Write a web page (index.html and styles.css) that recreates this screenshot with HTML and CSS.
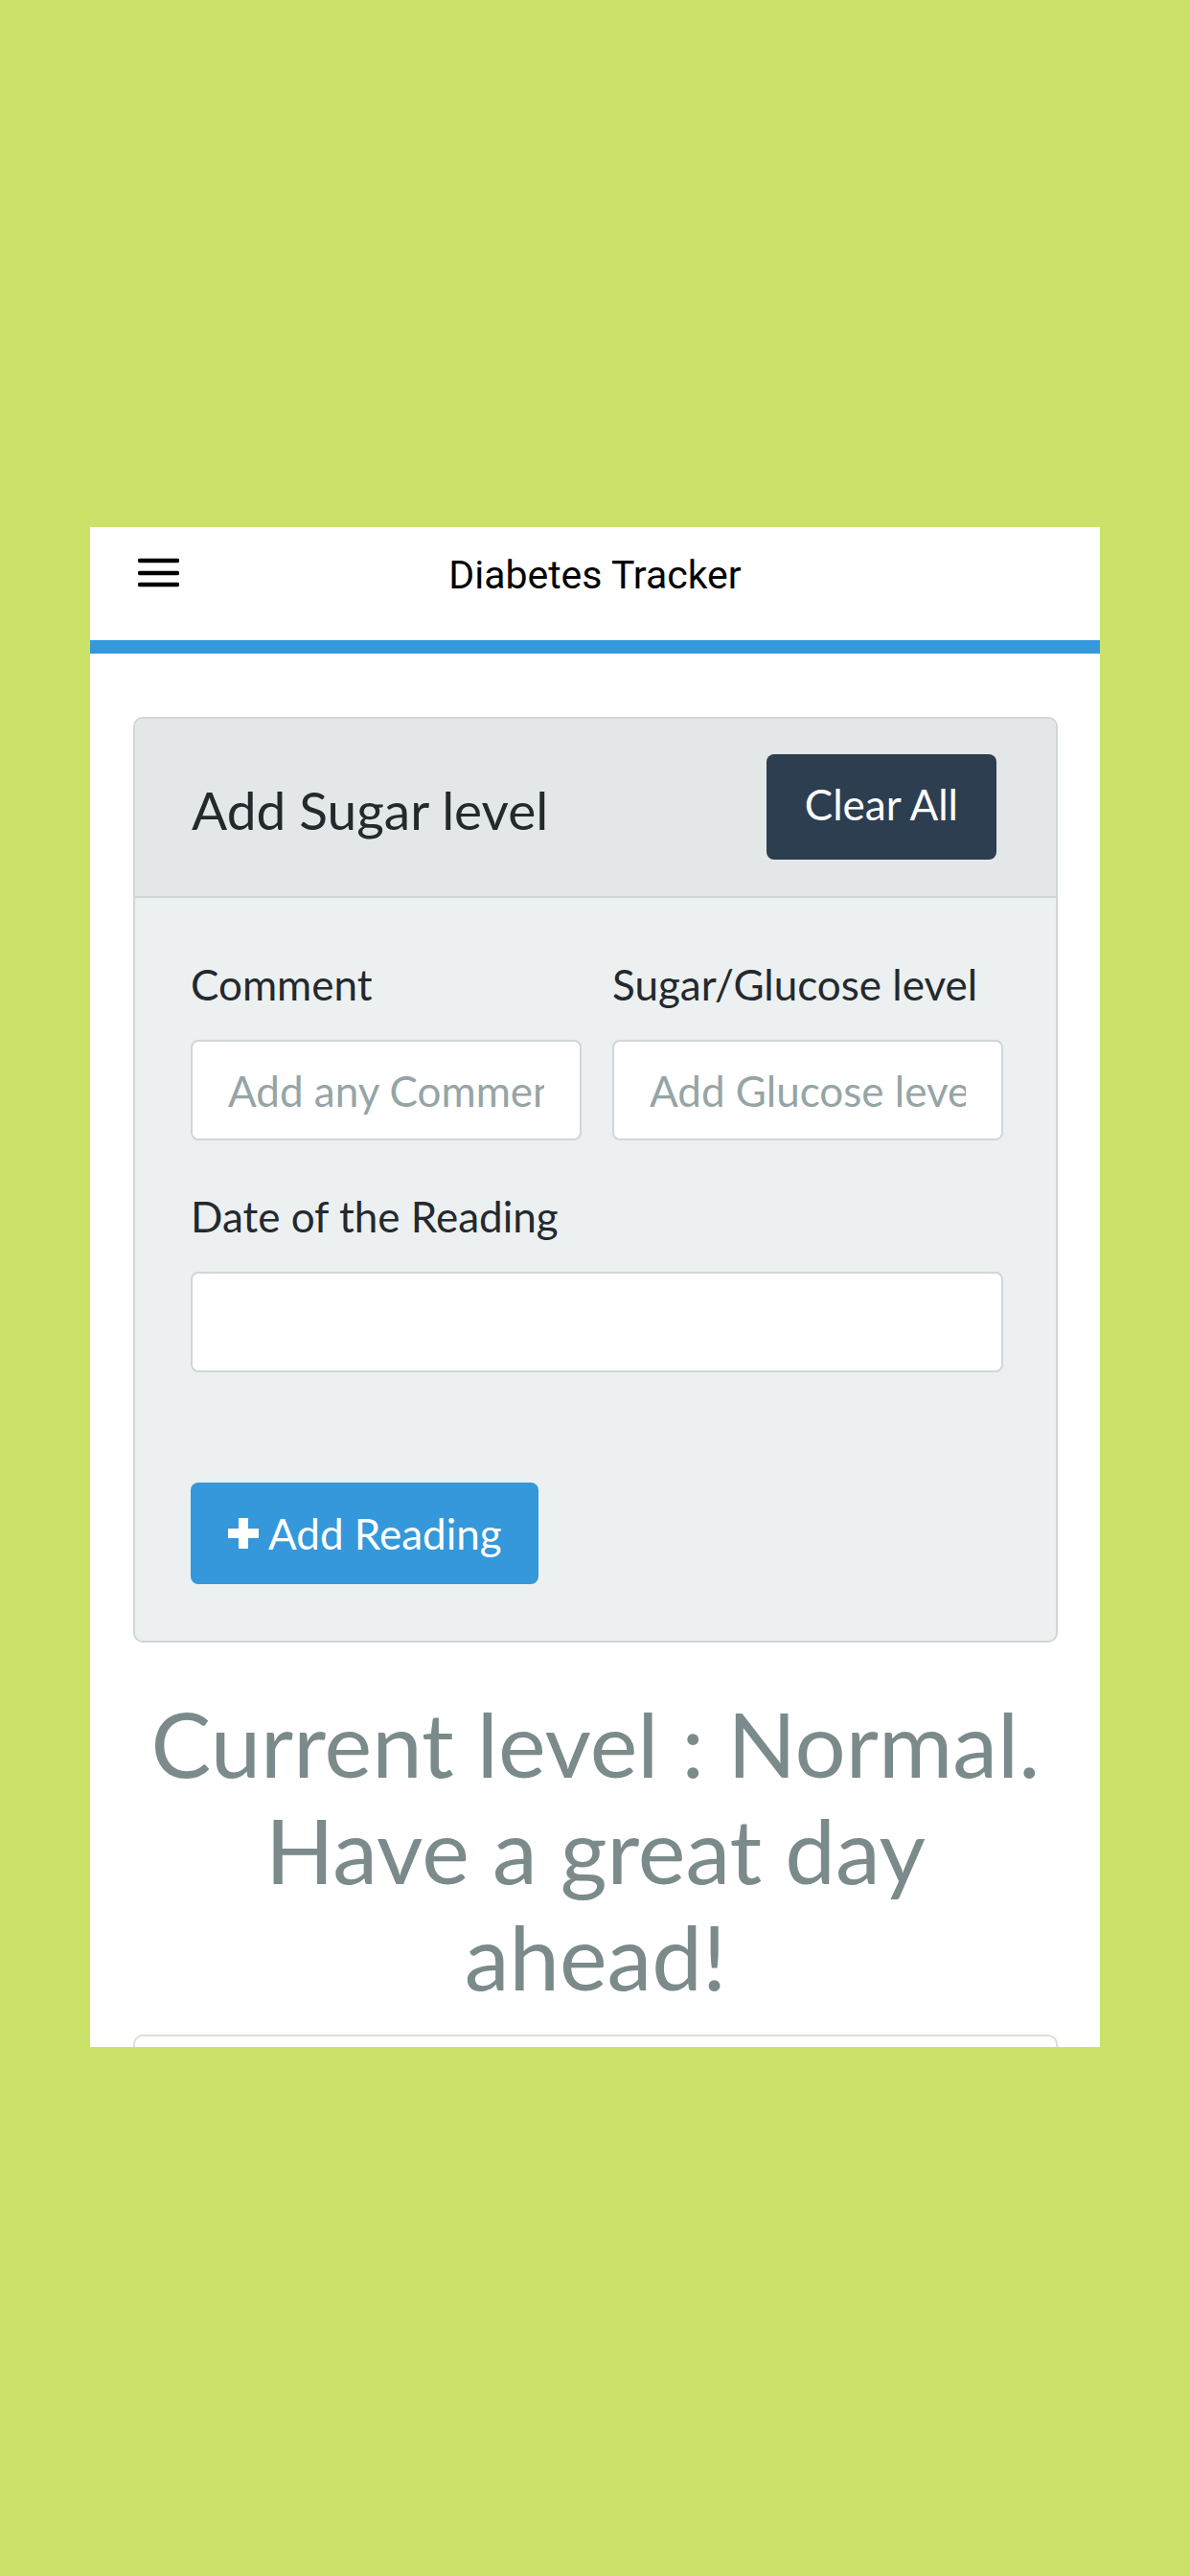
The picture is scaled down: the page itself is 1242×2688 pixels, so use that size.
FILE: index.html
```html
<!DOCTYPE html>
<html lang="en">

<head>
  <meta charset="UTF-8">
  <meta name="viewport" content="width=device-width, initial-scale=1.0">
  <title>Diabetes Tracker</title>
  <link rel="stylesheet" href="styles.css">
</head>

<body>
  <div class="phone">
    <header class="toolbar">
      <button class="menu-btn" aria-label="Menu">
        <svg width="43" height="32" viewBox="0 0 43 32">
          <path d="M2 3h39M2 16h39M2 28h39" stroke="#000" stroke-width="4.5" stroke-linecap="round" />
        </svg>
      </button>
      <div class="toolbar-title">Diabetes Tracker</div>
    </header>
    <div class="toolbar-line"></div>

    <main class="content">
      <div class="panel">
        <div class="panel-heading">
          <h3 class="panel-title">Add Sugar level</h3>
          <button class="btn btn-dark">Clear All</button>
        </div>
        <div class="panel-body">
          <div class="form-row">
            <div class="input-group">
              <label>Comment</label>
              <input type="text" placeholder="Add any Comment">
            </div>
            <div class="input-group">
              <label>Sugar/Glucose level</label>
              <input type="text" placeholder="Add Glucose level">
            </div>
          </div>
          <div class="input-group">
            <label>Date of the Reading</label>
            <input type="text">
          </div>
          <button class="btn btn-info">
            <svg width="34" height="34" viewBox="0 0 34 34">
              <path d="M12 1h10v11h11v10H22v11H12V22H1V12h11z" fill="#fff" />
            </svg>
            Add Reading
          </button>
        </div>
      </div>

      <h1 class="status">Current level : Normal. Have a great day ahead!</h1>

      <div class="panel panel-white"></div>
    </main>
  </div>
</body>

</html>
```

FILE: styles.css
```css
body {
  margin: 0;
  background: #cbe268;
  font-family: Lato, "Open Sans", sans-serif;
}

.phone {
  width: 1054px;
  height: 1586px;
  margin: 550px 0 0 94px;
  background: white;
  overflow: hidden;
}

/* top bar */
.toolbar {
  height: 118px;
  display: flex;
  align-items: flex-start;
  padding: 0 50px;
  box-sizing: border-box;
  position: relative;
}

.menu-btn {
  background: none;
  border: none;
  padding: 0;
  margin-top: 32px;
  line-height: 0;
}

.toolbar-title {
  position: absolute;
  left: 0;
  right: 0;
  top: 28px;
  text-align: center;
  font-family: Roboto, "Liberation Sans", sans-serif;
  font-size: 41px;
  line-height: 44px;
  color: #000;
  pointer-events: none;
}

.toolbar-line {
  height: 14px;
  background: #3498db;
}

.content {
  padding: 66px 44px 0 45px;
}

/* card */
.panel {
  border: 2px solid #d0d6d7;
  border-radius: 10px;
  background: #ecf0f1;
  overflow: hidden;
}

.panel-heading {
  display: flex;
  justify-content: space-between;
  align-items: center;
  height: 185px;
  padding: 0 62px 0 59px;
  background: #e3e7e8;
  border-bottom: 2px solid #d0d6d7;
}

.panel-title {
  margin: 4px 0 0;
  font-size: 55px;
  font-weight: normal;
  color: #24292d;
}

.btn {
  border: none;
  border-radius: 8px;
  color: white;
  font-family: Lato, "Open Sans", sans-serif;
  font-size: 44px;
  cursor: pointer;
}

.btn-dark {
  background: #2c3e50;
  height: 110px;
  padding: 0 40px 6px;
  margin-top: -2px;
}

.btn-info {
  background: #3498db;
  height: 106px;
  padding: 0 38px;
  margin-top: 115px;
  display: flex;
  align-items: center;
  gap: 9px;
}

.panel-body {
  padding: 64px 55px 59px 58px;
}

.form-row {
  display: flex;
  gap: 32px;
  margin-bottom: 53px;
}

.input-group {
  flex: 1;
}

label {
  display: block;
  font-size: 44px;
  line-height: 52px;
  color: #24292d;
  margin-bottom: 32px;
}

input {
  display: block;
  width: 100%;
  box-sizing: border-box;
  height: 105px;
  padding: 0 37px;
  border: 2px solid #d0d6d7;
  border-radius: 8px;
  background: white;
  font-family: Lato, "Open Sans", sans-serif;
  font-size: 44px;
  color: #2c3e50;
}

input::placeholder {
  color: #95a5a6;
}

.status {
  margin: 49px 0 27px;
  padding: 0 8px;
  text-align: center;
  font-size: 94px;
  line-height: 111px;
  font-weight: normal;
  color: #7b8a8b;
}

.panel-white {
  background: white;
  border-color: #dddddd;
  height: 200px;
}
```
